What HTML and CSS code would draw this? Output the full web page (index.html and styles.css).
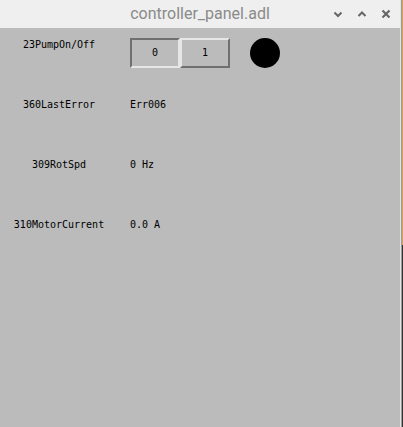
FILE: index.html
```html
<!DOCTYPE html>
<html>
<head>
<meta charset="utf-8">
<link rel="stylesheet" href="styles.css">
</head>
<body>
<div class="window">
  <div class="main">
    <div class="titlebar">
      <div class="spacer"></div>
      <div class="title">controller_panel.adl</div>
      <div class="controls">
        <svg class="ctl" width="10" height="8" viewBox="0 0 10 8"><path d="M1.5 2.5 L5 6 L8.5 2.5" fill="none" stroke="#666" stroke-width="2"/></svg>
        <svg class="ctl" width="10" height="8" viewBox="0 0 10 8"><path d="M1.5 6 L5 2.5 L8.5 6" fill="none" stroke="#666" stroke-width="2"/></svg>
        <svg class="ctl close" width="10" height="10" viewBox="0 0 10 10"><path d="M1.5 1.5 L8.5 8.5 M8.5 1.5 L1.5 8.5" fill="none" stroke="#666" stroke-width="2.2"/></svg>
      </div>
    </div>
    <div class="panel">
      <div class="row">
        <div class="label">23PumpOn/Off</div>
        <div class="value controls-row">
          <div class="btn pressed">0</div>
          <div class="btn raised">1</div>
          <div class="led"></div>
        </div>
      </div>
      <div class="row">
        <div class="label">360LastError</div>
        <div class="value">Err006</div>
      </div>
      <div class="row">
        <div class="label">309RotSpd</div>
        <div class="value">0 Hz</div>
      </div>
      <div class="row">
        <div class="label">310MotorCurrent</div>
        <div class="value">0.0 A</div>
      </div>
    </div>
  </div>
  <div class="edge">
    <div class="edge-a"></div>
    <div class="edge-b"></div>
    <div class="edge-c"><div class="edge-top"></div><div class="edge-bottom"></div></div>
  </div>
</div>
</body>
</html>
```
FILE: styles.css
```css
html, body {
  margin: 0;
  padding: 0;
  background: #bbbbbb;
}
.window {
  display: flex;
  width: 403px;
  height: 427px;
}
.main {
  width: 400px;
  display: flex;
  flex-direction: column;
}
.titlebar {
  height: 28px;
  background: #efefef;
  display: grid;
  grid-template-columns: 1fr auto 1fr;
  align-items: center;
}
.title {
  font-family: Roboto, "Noto Sans", sans-serif;
  font-size: 16px;
  color: #8a8a8a;
  line-height: 28px;
  padding-bottom: 2px;
}
.controls {
  display: flex;
  justify-content: flex-end;
  align-items: center;
  gap: 14px;
  padding-right: 9px;
  padding-bottom: 2px;
}
.ctl { display: block; }
.panel {
  flex: 1;
  background: #bbbbbb;
  padding-top: 10px;
  font-family: "DejaVu Sans Mono", monospace;
  font-size: 10px;
  line-height: 12px;
  color: #000;
}
.row {
  height: 60px;
  display: grid;
  grid-template-columns: 118px 1fr;
  column-gap: 12px;
  align-items: start;
}
.label {
  text-align: center;
  margin-top: 1px;
}
.value {
  margin-top: 1px;
}
.controls-row {
  margin-top: 0;
  display: flex;
  align-items: center;
}
.btn {
  box-sizing: border-box;
  width: 50px;
  height: 30px;
  border: 2px solid;
  display: flex;
  align-items: center;
  justify-content: center;
  background: #bbbbbb;
}
.pressed {
  border-color: #707070 #e6e6e6 #e6e6e6 #707070;
}
.raised {
  border-color: #e6e6e6 #707070 #707070 #e6e6e6;
}
.led {
  width: 30px;
  height: 30px;
  border-radius: 50%;
  background: #000;
  margin-left: 20px;
}
.edge {
  display: flex;
  width: 3px;
}
.edge-a { width: 1px; background: #e4e4e4; }
.edge-b { width: 1px; background: #9a9a9a; }
.edge-c { width: 1px; display: flex; flex-direction: column; }
.edge-top { height: 245px; background: #d9a15a; }
.edge-bottom { flex: 1; background: #333333; }
```
